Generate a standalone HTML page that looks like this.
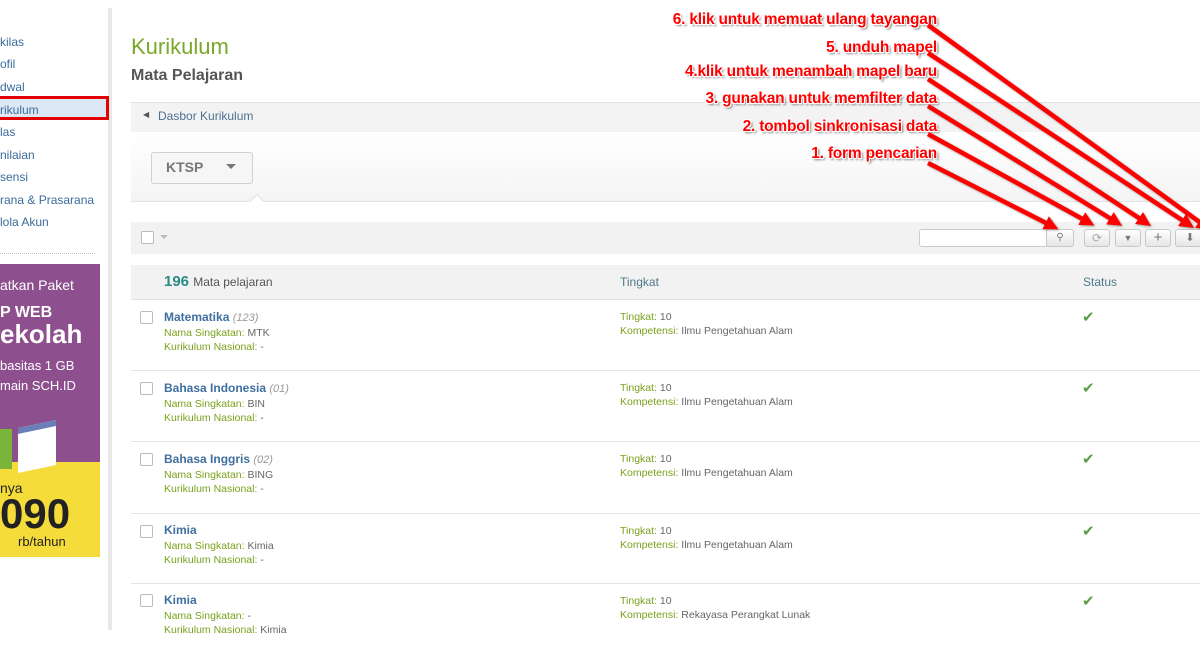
<!DOCTYPE html>
<html><head><meta charset="utf-8"><style>
*{margin:0;padding:0;box-sizing:border-box}
body{width:1200px;height:630px;overflow:hidden;background:#fff;font-family:"Liberation Sans",Arial,sans-serif;position:relative}
.a{position:absolute;white-space:nowrap}
.nav{font-size:12px;color:#3b6c9c;left:0}
.cb{position:absolute;width:13px;height:13px;border:1px solid #bbb;border-radius:2px;background:#fff}
.t{font-size:12px;font-weight:bold;color:#3f6f9f}
.t i{font-weight:normal;color:#999;font-size:11px}
.s{font-size:10.5px;color:#666}
.s b{font-weight:normal;color:#7aa21c}
.btn{position:absolute;top:229px;height:18px;border:1px solid #c8c8c8;border-radius:3px;background:linear-gradient(#fff,#e6e6e6);color:#777;font-size:12px;text-align:center;line-height:16px}
.lab{position:absolute;right:263px;font-size:15.5px;font-weight:bold;color:#f00;text-shadow:1px 1px 0 #fff,-1px -1px 0 #fff,1px -1px 0 #fff,-1px 1px 0 #fff,2px 2px 2px #777;white-space:nowrap;letter-spacing:-0.2px}
</style></head><body>
<!-- sidebar -->
<div class="a" style="left:108px;top:8px;width:4px;height:622px;background:#e8e8e8"></div>
<div class="a nav" style="top:35px">kilas</div>
<div class="a nav" style="top:57px">ofil</div>
<div class="a nav" style="top:80px">dwal</div>
<div class="a" style="left:0;top:96px;width:109px;height:24px;background:#dce9f5;border:3px solid #e30000;border-left:none"></div>
<div class="a nav" style="top:103px">rikulum</div>
<div class="a nav" style="top:125px">las</div>
<div class="a nav" style="top:148px">nilaian</div>
<div class="a nav" style="top:170px">sensi</div>
<div class="a nav" style="top:193px">rana &amp; Prasarana</div>
<div class="a nav" style="top:215px">lola Akun</div>
<div class="a" style="left:0;top:253px;width:95px;border-top:1px dotted #bbb"></div>
<div class="a" style="left:0;top:264px;width:100px;height:293px;background:#8e4f8e;overflow:hidden">
 <div class="a" style="left:0;top:198px;width:100px;height:95px;background:#f5dc3a"></div>
 <div class="a" style="left:0;top:13px;color:#fff;font-size:14px">atkan Paket</div>
 <div class="a" style="left:0;top:40px;color:#fff;font-size:16px;font-weight:bold">P WEB</div>
 <div class="a" style="left:0;top:55px;color:#fff;font-size:26px;font-weight:bold">ekolah</div>
 <div class="a" style="left:0;top:94px;color:#fff;font-size:13px">basitas 1 GB</div>
 <div class="a" style="left:0;top:114px;color:#fff;font-size:13px">main SCH.ID</div>
 <div class="a" style="left:18px;top:160px;width:38px;height:45px;background:#fff;border-top:6px solid #6a7fb8;transform:skewY(-12deg)"></div>
 <div class="a" style="left:0;top:165px;width:12px;height:40px;background:#7ab53b"></div>
 <div class="a" style="left:0;top:216px;font-size:14px;color:#222">nya</div>
 <div class="a" style="left:0;top:226px;font-size:42px;font-weight:bold;color:#222">090</div>
 <div class="a" style="left:18px;top:270px;font-size:13px;color:#222">rb/tahun</div>
</div>
<!-- main -->
<div class="a" style="left:131px;top:34px;font-size:22px;color:#7aa82a">Kurikulum</div>
<div class="a" style="left:131px;top:67px;font-size:16px;font-weight:bold;color:#555">Mata Pelajaran</div>
<div class="a" style="left:131px;top:102px;width:1069px;height:30px;background:#f3f3f3;border-top:1px solid #e2e2e2"></div>
<div class="a" style="left:143px;top:110px;font-size:8px;color:#555">◀</div>
<div class="a" style="left:158px;top:109px;font-size:12px;color:#4d6f92">Dasbor Kurikulum</div>
<div class="a" style="left:131px;top:132px;width:1069px;height:70px;background:linear-gradient(#fff,#f4f4f4);border-bottom:1px solid #e4e4e4"></div>
<div class="a" style="left:151px;top:152px;width:102px;height:32px;border:1px solid #d0d0d0;border-radius:3px;background:#f6f6f6"></div>
<div class="a" style="left:166px;top:159px;font-size:14px;font-weight:bold;color:#777">KTSP</div>
<div class="a" style="left:226px;top:164px;border:5px solid transparent;border-top-color:#777"></div>
<div class="a" style="left:252px;top:196px;width:10px;height:10px;background:#fff;border-left:1px solid #e0e0e0;border-top:1px solid #e0e0e0;transform:rotate(45deg)"></div>
<div class="a" style="left:131px;top:222px;width:1069px;height:32px;background:#f2f2f2"></div>
<div class="cb" style="left:141px;top:231px"></div>
<div class="a" style="left:160px;top:235px;border:4px solid transparent;border-top-color:#bbb"></div>
<div class="a" style="left:919px;top:229px;width:128px;height:18px;border:1px solid #ccc;border-radius:3px 0 0 3px;background:#fff"></div>
<div class="btn" style="left:1046px;width:28px;font-size:10px">&#9906;</div>
<div class="btn" style="left:1084px;width:26px;color:#aaa">⟳</div>
<div class="btn" style="left:1115px;width:26px;font-size:9px">▼</div>
<div class="btn" style="left:1145px;width:26px;font-size:15px">+</div>
<div class="btn" style="left:1175px;width:30px;font-size:11px">⬇</div>
<div class="a" style="left:131px;top:265px;width:1069px;height:35px;background:#f2f2f2;border-bottom:1px solid #e2e2e2"></div>
<div class="a" style="left:164px;top:273px;font-size:15px;font-weight:bold;color:#2a8a86">196 <span style="font-size:12px;font-weight:normal;color:#555">Mata pelajaran</span></div>
<div class="a" style="left:620px;top:275px;font-size:12px;color:#4d7a8a">Tingkat</div>
<div class="a" style="left:1083px;top:275px;font-size:12px;color:#4d7a8a">Status</div>

<div class="a" style="left:131px;top:300px;width:1069px">
 <div style="position:relative;height:71px;border-bottom:1px solid #e4e4e4">
  <div class="cb" style="left:9px;top:11px"></div>
  <div class="a t" style="left:33px;top:10px">Matematika <i>(123)</i></div>
  <div class="a s" style="left:33px;top:27px"><b>Nama Singkatan:</b> MTK</div>
  <div class="a s" style="left:33px;top:41px"><b>Kurikulum Nasional:</b> -</div>
  <div class="a s" style="left:489px;top:11px"><b>Tingkat:</b> 10</div>
  <div class="a s" style="left:489px;top:25px"><b>Kompetensi:</b> Ilmu Pengetahuan Alam</div>
  <div class="a" style="left:951px;top:8px;color:#5a9e4a;font-size:15px">✔</div>
 </div>
 <div style="position:relative;height:71px;border-bottom:1px solid #e4e4e4">
  <div class="cb" style="left:9px;top:11px"></div>
  <div class="a t" style="left:33px;top:10px">Bahasa Indonesia <i>(01)</i></div>
  <div class="a s" style="left:33px;top:27px"><b>Nama Singkatan:</b> BIN</div>
  <div class="a s" style="left:33px;top:41px"><b>Kurikulum Nasional:</b> -</div>
  <div class="a s" style="left:489px;top:11px"><b>Tingkat:</b> 10</div>
  <div class="a s" style="left:489px;top:25px"><b>Kompetensi:</b> Ilmu Pengetahuan Alam</div>
  <div class="a" style="left:951px;top:8px;color:#5a9e4a;font-size:15px">✔</div>
 </div>
 <div style="position:relative;height:72px;border-bottom:1px solid #e4e4e4">
  <div class="cb" style="left:9px;top:11px"></div>
  <div class="a t" style="left:33px;top:10px">Bahasa Inggris <i>(02)</i></div>
  <div class="a s" style="left:33px;top:27px"><b>Nama Singkatan:</b> BING</div>
  <div class="a s" style="left:33px;top:41px"><b>Kurikulum Nasional:</b> -</div>
  <div class="a s" style="left:489px;top:11px"><b>Tingkat:</b> 10</div>
  <div class="a s" style="left:489px;top:25px"><b>Kompetensi:</b> Ilmu Pengetahuan Alam</div>
  <div class="a" style="left:951px;top:8px;color:#5a9e4a;font-size:15px">✔</div>
 </div>
 <div style="position:relative;height:70px;border-bottom:1px solid #e4e4e4">
  <div class="cb" style="left:9px;top:11px"></div>
  <div class="a t" style="left:33px;top:9px">Kimia</div>
  <div class="a s" style="left:33px;top:26px"><b>Nama Singkatan:</b> Kimia</div>
  <div class="a s" style="left:33px;top:40px"><b>Kurikulum Nasional:</b> -</div>
  <div class="a s" style="left:489px;top:11px"><b>Tingkat:</b> 10</div>
  <div class="a s" style="left:489px;top:25px"><b>Kompetensi:</b> Ilmu Pengetahuan Alam</div>
  <div class="a" style="left:951px;top:8px;color:#5a9e4a;font-size:15px">✔</div>
 </div>
 <div style="position:relative;height:70px">
  <div class="cb" style="left:9px;top:10px"></div>
  <div class="a t" style="left:33px;top:9px">Kimia</div>
  <div class="a s" style="left:33px;top:26px"><b>Nama Singkatan:</b> -</div>
  <div class="a s" style="left:33px;top:40px"><b>Kurikulum Nasional:</b> Kimia</div>
  <div class="a s" style="left:489px;top:11px"><b>Tingkat:</b> 10</div>
  <div class="a s" style="left:489px;top:25px"><b>Kompetensi:</b> Rekayasa Perangkat Lunak</div>
  <div class="a" style="left:951px;top:8px;color:#5a9e4a;font-size:15px">✔</div>
 </div>
</div>
<!-- annotations -->
<div class="lab" style="top:11px">6. klik untuk memuat ulang tayangan</div>
<div class="lab" style="top:39px">5. unduh mapel</div>
<div class="lab" style="top:63px">4.klik untuk menambah mapel baru</div>
<div class="lab" style="top:90px">3. gunakan untuk memfilter data</div>
<div class="lab" style="top:118px">2. tombol sinkronisasi data</div>
<div class="lab" style="top:145px">1. form pencarian</div>
<svg class="a" style="left:0;top:0" width="1200" height="630">
<defs><marker id="m" markerWidth="3.2" markerHeight="3.2" refX="1.6" refY="1.6" orient="auto"><path d="M0,0L3.2,1.6L0,3.2z" fill="#f00"/></marker></defs>
<g stroke="#f00" stroke-width="4.5" fill="none" marker-end="url(#m)" style="filter:drop-shadow(1px 1px 1px #999)">
<path d="M928,25L1205,226"/>
<path d="M928,53L1188,224"/>
<path d="M928,79L1145,222"/>
<path d="M928,106L1116,222"/>
<path d="M928,134L1088,222"/>
<path d="M928,163L1052,226"/>
</g></svg>
</body></html>
